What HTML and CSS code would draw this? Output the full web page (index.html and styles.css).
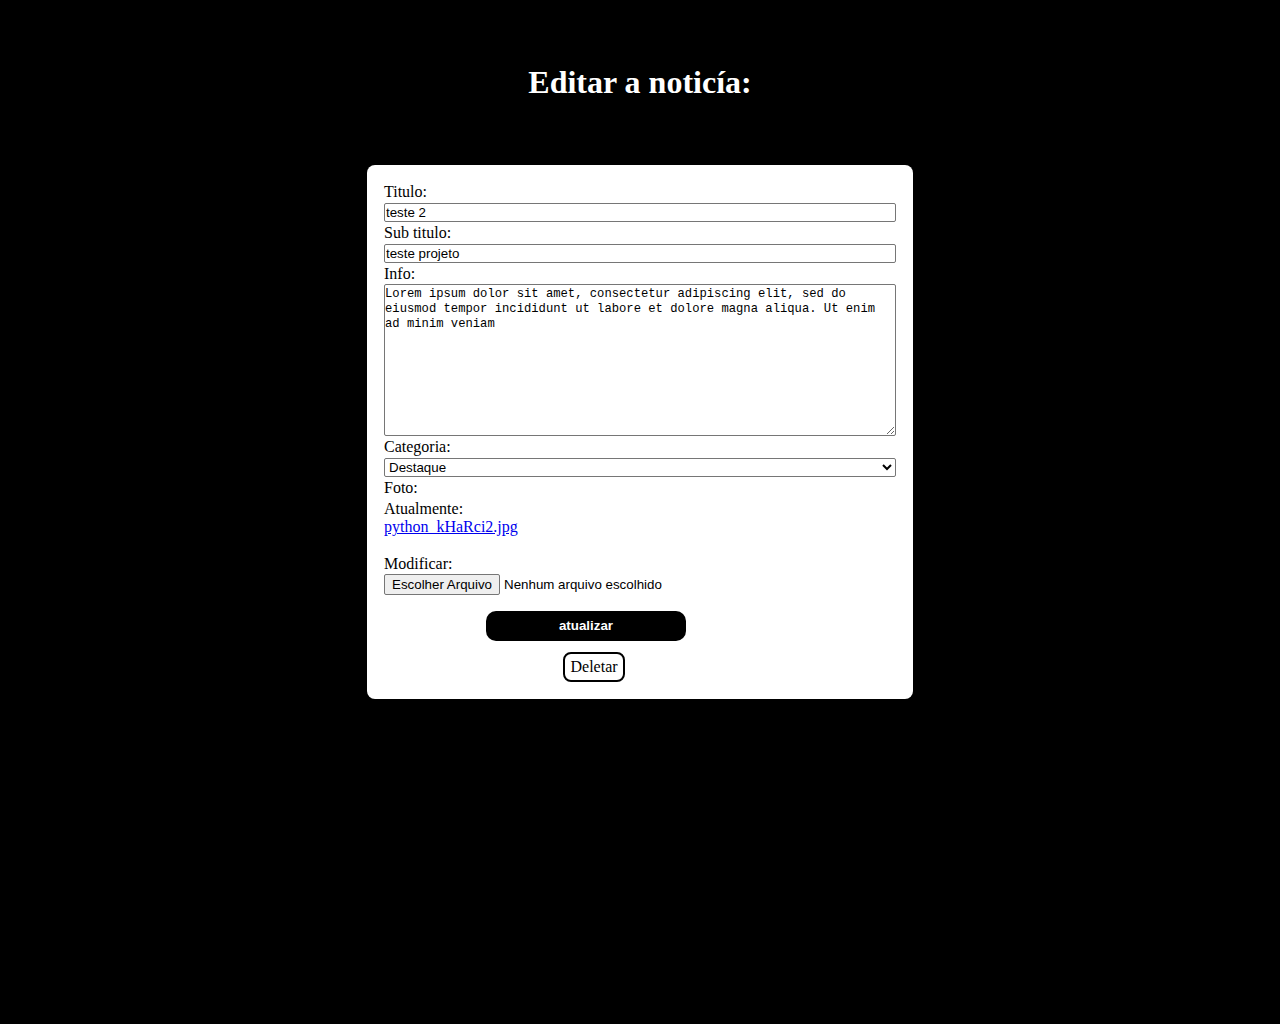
FILE: index.html
```html
<!DOCTYPE html>
<html lang="pt-BR">
<head>
<meta charset="utf-8">
<title>Editar a noticía</title>
<link rel="stylesheet" href="styles.css">
</head>
<body>
<main class="page">
  <h1 class="title">Editar a noticía:</h1>
  <form class="card">
    <label class="lbl" for="titulo">Titulo:</label>
    <input class="field" id="titulo" type="text" value="teste 2">
    <label class="lbl" for="sub">Sub titulo:</label>
    <input class="field" id="sub" type="text" value="teste projeto">
    <label class="lbl" for="info">Info:</label>
    <textarea class="area" id="info">Lorem ipsum dolor sit amet, consectetur adipiscing elit, sed do eiusmod tempor incididunt ut labore et dolore magna aliqua. Ut enim ad minim veniam</textarea>
    <label class="lbl" for="cat">Categoria:</label>
    <select class="sel" id="cat"><option>Destaque</option></select>
    <label class="lbl foto">Foto:</label>
    <div class="line">Atualmente:</div>
    <a class="line link" href="#">python_kHaRci2.jpg</a>
    <div class="line modif">Modificar:</div>
    <div class="file">
      <span class="file-btn">Escolher Arquivo</span>
      <span class="file-txt">Nenhum arquivo escolhido</span>
    </div>
    <button class="btn-save" type="button">atualizar</button>
    <div class="del-row"><span class="btn-del">Deletar</span></div>
  </form>
</main>
</body>
</html>
```
FILE: styles.css
```css
html, body {
  margin: 0;
  padding: 0;
  background: #000;
}
body {
  min-height: 1024px;
  font-family: "Liberation Serif", "Times New Roman", serif;
  font-size: 16px;
  color: #000;
}
.page {
  display: flex;
  flex-direction: column;
  align-items: center;
}
.title {
  margin: 64px 0 0;
  font-family: "Liberation Serif", serif;
  font-size: 32px;
  font-weight: bold;
  color: #fff;
  line-height: 37px;
}
.card {
  box-sizing: border-box;
  width: 546px;
  margin-top: 64px;
  padding: 18px 17px 17px;
  background: #fff;
  border-radius: 8px;
  display: flex;
  flex-direction: column;
  align-items: flex-start;
}
.lbl, .line {
  display: block;
  line-height: 18px;
}
.field {
  box-sizing: border-box;
  width: 512px;
  height: 19px;
  margin: 2px 0 2px;
  padding: 0 1px;
  border: 1px solid #767676;
  border-radius: 2px;
  font-family: "Liberation Sans", Arial, sans-serif;
  font-size: 13.333px;
  color: #000;
  background: #fff;
}
.area {
  box-sizing: border-box;
  width: 512px;
  height: 152px;
  margin: 1px 0 2px;
  padding: 2px 0;
  border: 1px solid #767676;
  border-radius: 2px;
  font-family: "Liberation Mono", "DejaVu Sans Mono", monospace;
  font-size: 12.2px;
  line-height: 15px;
  color: #000;
}
.sel {
  box-sizing: border-box;
  width: 512px;
  height: 19px;
  margin: 2px 0 2px;
  border: 1px solid #767676;
  border-radius: 2px;
  font-family: "Liberation Sans", Arial, sans-serif;
  font-size: 13.333px;
  color: #000;
  background: #fff;
}
.foto {
  margin-bottom: 3px;
}
.link {
  color: #0000ee;
  text-decoration: underline;
}
.modif {
  margin-top: 19px;
}
.file {
  display: flex;
  align-items: center;
  gap: 4px;
  margin-top: 1px;
  font-family: "Liberation Sans", Arial, sans-serif;
  font-size: 13.333px;
}
.file-btn {
  box-sizing: border-box;
  height: 21px;
  padding: 0 7px;
  display: flex;
  align-items: center;
  background: #efefef;
  border: 1px solid #767676;
  border-radius: 2px;
  color: #000;
}
.file-txt {
  color: #000;
}
.btn-save {
  box-sizing: border-box;
  width: 200px;
  height: 30px;
  margin: 16px 0 0 102px;
  padding: 0 0 2px;
  border: none;
  border-radius: 10px;
  background: #000;
  color: #fff;
  font-family: "Liberation Sans", Arial, sans-serif;
  font-size: 13.333px;
  font-weight: bold;
}
.del-row {
  margin: 11px 0 0 179px;
}
.btn-del {
  display: inline-block;
  padding: 4px 5px 4px 5.5px;
  line-height: 18px;
  border: 2px solid #000;
  border-radius: 8px;
}
```
